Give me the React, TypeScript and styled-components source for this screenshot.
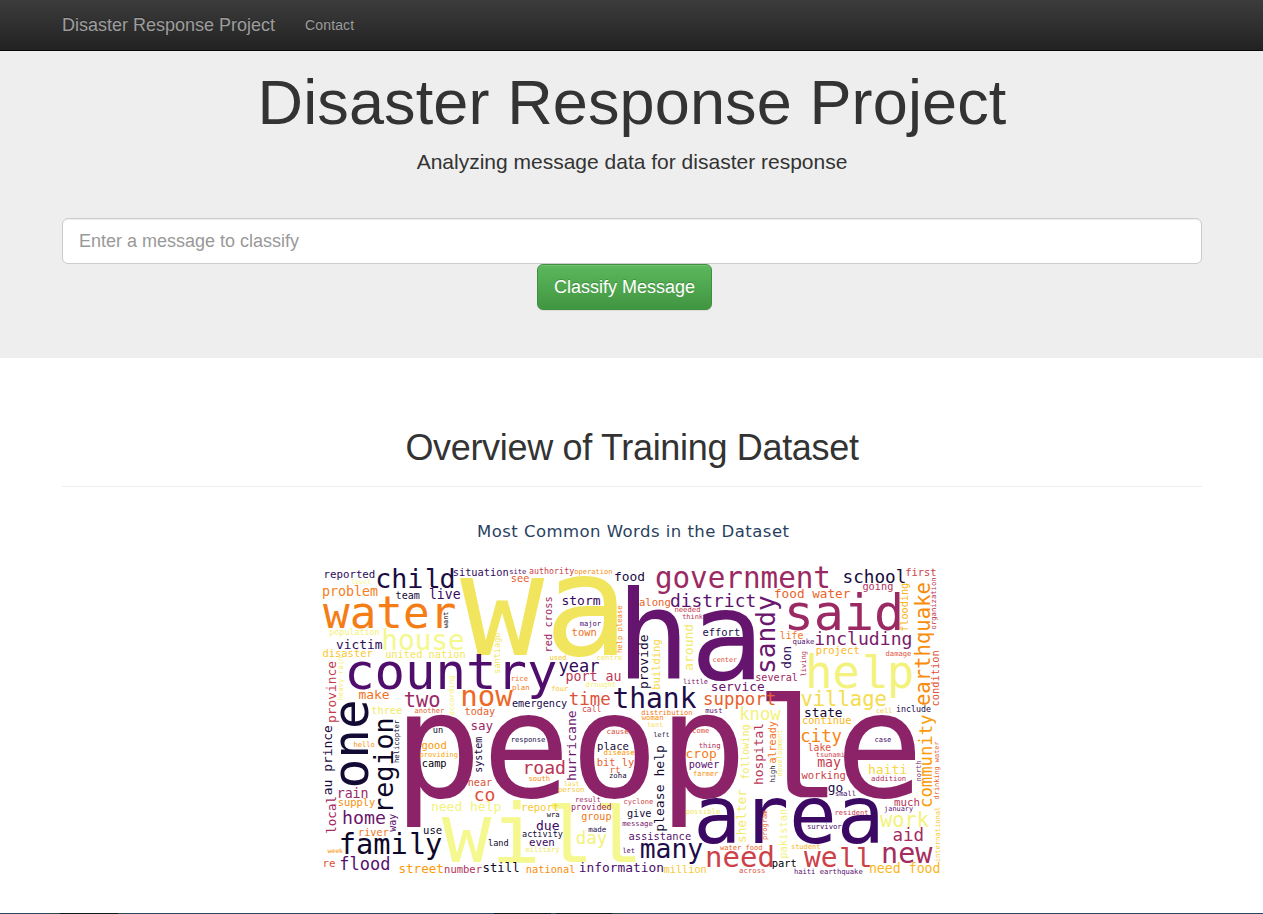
import React from 'react';
import styled, { createGlobalStyle } from 'styled-components';

const GlobalStyle = createGlobalStyle`
  * { box-sizing: border-box; }
  body {
    margin: 0;
    background: #fff;
    color: #333;
    font: 14px/20px "Liberation Sans", Arial, sans-serif;
    overflow: hidden;
  }
`;

const Page = styled.div`
  height: 914px;
  display: flex;
  flex-direction: column;
`;

const Navbar = styled.nav`
  height: 51px;
  padding: 0 62px;
  display: flex;
  align-items: center;
  gap: 30px;
  background: linear-gradient(to bottom, #3c3c3c 0%, #222 100%);
  border-bottom: 1px solid #080808;
  color: #9d9d9d;
  text-shadow: 0 -1px 0 rgba(0, 0, 0, 0.25);
`;

const Brand = styled.a`
  width: 213px;
  font-size: 18px;
  white-space: nowrap;
`;

const NavLink = styled.a`
  font-size: 14px;
  letter-spacing: 0.15px;
`;

const Jumbotron = styled.header`
  height: 307px;
  padding: 16.5px 61px 0 62px;
  background: #eee;
  text-align: center;
`;

const Title = styled.h1`
  margin: 0 0 10px;
  font-size: 63px;
  line-height: 69.3px;
  font-weight: 400;
  letter-spacing: 0.12px;
`;

const Lead = styled.p`
  margin: 0 0 41.8px;
  font-size: 21px;
  line-height: 29.4px;
`;

const Form = styled.form`
  display: flex;
  flex-direction: column;
  align-items: center;
`;

const MessageInput = styled.input`
  width: 1140px;
  height: 46px;
  padding: 10px 16px;
  border: 1px solid #ccc;
  border-radius: 6px;
  background: #fff;
  box-shadow: inset 0 1px 1px rgba(0, 0, 0, 0.075);
  font: 18px/24px "Liberation Sans", Arial, sans-serif;
  &::placeholder { color: #999; opacity: 1; }
`;

const SubmitButton = styled.button`
  width: 175px;
  height: 46px;
  margin-right: 15px;
  padding: 0;
  border: 1px solid #3e8f3e;
  border-radius: 6px;
  background: linear-gradient(to bottom, #5cb85c 0%, #419641 100%);
  box-shadow: inset 0 1px 0 rgba(255, 255, 255, 0.15), 0 1px 1px rgba(0, 0, 0, 0.075);
  color: #fff;
  font: 18px/24px "Liberation Sans", Arial, sans-serif;
  text-shadow: 0 -1px 0 rgba(0, 0, 0, 0.2);
`;

const Overview = styled.main`
  flex: 1;
  min-height: 0;
  padding: 70px 61px 0 62px;
`;

const SectionTitle = styled.h2`
  margin: 0;
  padding-bottom: 18px;
  border-bottom: 1px solid #eee;
  font-size: 36px;
  line-height: 40px;
  font-weight: 400;
  letter-spacing: -0.32px;
  text-align: center;
`;

const Cloud = styled.svg`
  display: block;
  width: 1140px;
  height: 393px;
  font-family: "DejaVu Sans Mono", monospace;
`;

const CloudTitle = styled.text`
  font: 16.5px "DejaVu Sans", Verdana, sans-serif;
  fill: #2a3f5f;
`;

const FlatFootL = styled.tspan`
  font-family: "Liberation Mono", monospace;
`;

const BottomEdge = styled.footer`
  height: 1px;
  background: linear-gradient(to right, #28465a 0 60px, #101820 60px 118px, #28465a 118px 494px, #10141a 494px 551px, #28465a 551px 556px, #101820 556px 612px, #28465a 612px);
`;

/* Horizontal words: text, left ink edge, right ink edge, baseline, colour */
type Word = [string, number, number, number, string];

const across: Word[] = [
  ['wa', 460, 617, 655, '#f1e55d'],
  ['ha', 626.5, 754, 679, '#65156e'],
  ['people', 405.7, 916.7, 796.5, '#8c2369'],
  ['will', 441.7, 636, 861.7, '#f4f88e'],
  ['area', 697.7, 878, 843.3, '#3b0964'],
  ['country', 347.7, 556, 689, '#4f0d6c'],
  ['said', 787.7, 900, 630, '#9b2964'],
  ['help', 809, 912, 688, '#f3f27c'],
  ['water', 323, 455, 628, '#f57d15'],
  ['government', 656.5, 829, 588, '#9b2964'],
  ['reported', 325, 374.5, 578, '#2c0a58'],
  ['child', 377, 453.5, 588, '#1b0c41'],
  ['situation', 453.5, 508, 575.7, '#2f0a5b'],
  ['level', 351.7, 370.7, 584, '#f3f68a'],
  ['problem', 323, 377.5, 596, '#f5801a'],
  ['team', 396, 419.5, 599, '#160b39'],
  ['live', 430, 460, 599, '#3b0964'],
  ['population', 330, 379, 634.7, '#f3f078'],
  ['house', 383.5, 463.5, 650, '#f4f88e'],
  ['victim', 336.5, 382, 649, '#2f0a5b'],
  ['disaster', 323, 372.5, 656.5, '#f9c72e'],
  ['united nation', 386, 465, 657.5, '#f3e55d'],
  ['site', 509.7, 526, 574.3, '#57106e'],
  ['authority', 529.5, 574, 574.3, '#cc4248'],
  ['operation', 574.7, 612, 573.5, '#f98e09'],
  ['see', 511.7, 529, 582, '#e8602d'],
  ['food', 615, 644, 580.7, '#1b0c41'],
  ['storm', 562.5, 600, 605, '#3b0964'],
  ['major', 580, 601, 626, '#4a0c6b'],
  ['town', 572, 596, 636, '#f1731d'],
  ['used', 550, 566, 659.5, '#f9c72e'],
  ['centre', 597, 622, 659.5, '#f3e55d'],
  ['year', 559, 599, 672, '#2f0a5b'],
  ['along', 639.5, 670, 605.5, '#ea632a'],
  ['district', 671, 755, 607, '#5d126e'],
  ['needed', 675, 700, 612, '#c43c4e'],
  ['think', 682.5, 703, 619, '#b93556'],
  ['effort', 703, 739.5, 636, '#210c4a'],
  ['center', 713, 737, 661.5, '#dd513a'],
  ['food water', 775, 850, 598, '#ea632a'],
  ['life', 780.5, 803, 638.5, '#f37819'],
  ['school', 844, 905.5, 582.7, '#160b39'],
  ['first', 906, 936, 575.7, '#cc4248'],
  ['going', 863, 892.5, 590, '#b1325a'],
  ['including', 816, 911, 645.3, '#781c6d'],
  ['quake', 793, 814, 644, '#57106e'],
  ['project', 816.5, 859, 653.7, '#fbb61a'],
  ['damage', 886, 911, 656.3, '#dd513a'],
  ['make', 359, 389, 699, '#f1731d'],
  ['two', 404.5, 439.5, 707.3, '#9b2964'],
  ['now', 462.7, 512.7, 705.7, '#ed6925'],
  ['three', 371.7, 401.7, 714, '#f2ea69'],
  ['another', 415, 444, 712.5, '#e8602d'],
  ['today', 465, 495, 714.7, '#e8602d'],
  ['hello', 354, 374.5, 747, '#f98e09'],
  ['good', 422, 446, 748.7, '#fb9b06'],
  ['un', 433.5, 442.5, 733, '#0d0829'],
  ['providing', 420, 457.5, 756.5, '#fca50a'],
  ['camp', 422.5, 446, 766.5, '#000004'],
  ['say', 471.5, 492.7, 729.7, '#9b2964'],
  ['rice', 511.7, 527.7, 681, '#f1731d'],
  ['plan', 512.5, 529, 690, '#f57d15'],
  ['emergency', 512.5, 567, 706.5, '#210c4a'],
  ['four', 551.7, 568, 690.7, '#f9c72e'],
  ['port au', 566.7, 620.5, 680.7, '#bc3754'],
  ['drought', 586, 615.7, 687.3, '#f3f078'],
  ['time', 569.5, 610, 705, '#dd513a'],
  ['call', 582.5, 601, 711.7, '#cc4248'],
  ['thank', 613.5, 696.5, 707.7, '#210c4a'],
  ['response', 511.7, 545, 742.3, '#210c4a'],
  ['cause', 607, 628.5, 734.3, '#dd513a'],
  ['place', 598, 628.5, 750, '#140b34'],
  ['disease', 604, 634.5, 754.5, '#fb9b06'],
  ['bit ly', 597.5, 634, 766, '#e8602d'],
  ['rt', 610.7, 620, 773, '#e8602d'],
  ['zoha', 609.5, 626, 777.5, '#160b39'],
  ['little', 683.5, 707.7, 683.7, '#781c6d'],
  ['service', 711.7, 764, 691, '#6a176e'],
  ['several', 756, 797.5, 680.7, '#9b2964'],
  ['support', 704.5, 775, 705, '#e8602d'],
  ['distribution', 641.7, 692, 714.7, '#f37819'],
  ['must', 705.5, 722, 712.7, '#6a176e'],
  ['woman', 641.7, 663, 720, '#f98e09'],
  ['tent', 647.5, 662.7, 726.7, '#f6d746'],
  ['know', 740.7, 780.7, 720, '#f3f27c'],
  ['left', 654, 669, 737, '#140b34'],
  ['come', 692.7, 709, 733.3, '#dd513a'],
  ['thing', 699, 720, 747.7, '#b1325a'],
  ['crop', 686.5, 716, 758.3, '#f57d15'],
  ['power', 689.5, 719, 767.7, '#57106e'],
  ['village', 801, 886, 706, '#f3dd4f'],
  ['cell', 876.5, 892, 712.7, '#f9c932'],
  ['include', 896.7, 930.7, 712.3, '#210c4a'],
  ['state', 805, 842, 716.7, '#140b34'],
  ['continue', 802.7, 851, 724.3, '#fbb61a'],
  ['city', 801.5, 841.5, 741.7, '#f8850f'],
  ['lake', 808.5, 830.7, 751, '#dd513a'],
  ['tsunami', 816, 844.5, 756.7, '#cc4248'],
  ['may', 817.7, 840.7, 766.5, '#c43c4e'],
  ['case', 875, 891, 742, '#3b0964'],
  ['haiti', 869, 906.7, 774, '#f6d746'],
  ['rain', 338.5, 367.5, 797.7, '#9b2964'],
  ['supply', 338.5, 375, 805.7, '#f98e09'],
  ['home', 343.5, 385, 824, '#6a176e'],
  ['river', 359.5, 388.5, 836, '#f37819'],
  ['week', 327.5, 343, 852.7, '#f98e09'],
  ['family', 341, 441.5, 854.3, '#0d0829'],
  ['re', 324, 335, 866.7, '#dd513a'],
  ['flood', 340.7, 389, 870, '#57106e'],
  ['street', 399.5, 443, 872.7, '#fb9b06'],
  ['number', 445, 481.7, 873, '#b1325a'],
  ['still', 483.5, 519, 871.7, '#0d0829'],
  ['national', 526.7, 575, 872.7, '#f98e09'],
  ['information', 580, 663, 871.7, '#4a0c6b'],
  ['million', 664, 706, 872.7, '#f9c932'],
  ['near', 468.5, 492, 785.7, '#dd513a'],
  ['co', 475, 494.5, 800.7, '#dd513a'],
  ['need help', 432, 500.7, 811, '#f3f27c'],
  ['use', 424, 441.7, 833.7, '#0d0829'],
  ['land', 488.7, 508, 846, '#0d0829'],
  ['road', 525, 564.5, 774.3, '#b93556'],
  ['south', 529, 549.5, 780.7, '#f98e09'],
  ['last', 564.5, 579, 786.3, '#f6d746'],
  ['person', 558.5, 584, 792.3, '#f9c932'],
  ['report', 522.5, 558.5, 811, '#f9c932'],
  ['wra', 546.7, 559, 816.7, '#0d0829'],
  ['due', 536.7, 559, 830.3, '#3b0964'],
  ['activity', 522.5, 562.7, 836.7, '#140b34'],
  ['even', 529.5, 554, 846, '#3b0964'],
  ['military', 525.7, 559.5, 852.3, '#f2ea69'],
  ['result', 576, 600.5, 802.3, '#a52c60'],
  ['provided', 571.7, 611, 810.3, '#9b2964'],
  ['group', 581.7, 611, 820, '#f37819'],
  ['made', 588.5, 606, 832, '#210c4a'],
  ['day', 576.7, 606.7, 843.7, '#f3f27c'],
  ['cyclone', 624, 653, 804.3, '#cc4248'],
  ['give', 627.5, 651, 817.3, '#140b34'],
  ['message', 622.5, 652.5, 825.7, '#781c6d'],
  ['assistance', 629, 690.7, 840.3, '#57106e'],
  ['let', 623, 634.5, 852.7, '#57106e'],
  ['many', 640.7, 702.5, 857.7, '#210c4a'],
  ['need', 707.5, 772.5, 867.3, '#cc4248'],
  ['across', 739.5, 765, 872.7, '#dd513a'],
  ['water food', 720, 762, 850.3, '#ed6925'],
  ['possible', 686, 720, 813.7, '#f3e55d'],
  ['farmer', 693.5, 718, 775.7, '#f98e09'],
  ['working', 801.5, 845, 779, '#cc4248'],
  ['go', 828.5, 842.5, 791.7, '#210c4a'],
  ['small', 835.5, 855.7, 796, '#3b0964'],
  ['addition', 871.5, 905.7, 780.7, '#b1325a'],
  ['much', 894.5, 919, 805.7, '#b93556'],
  ['january', 884.5, 913, 811.3, '#57106e'],
  ['resident', 835.5, 868, 814.7, '#c43c4e'],
  ['survivor', 807.5, 841.5, 828.7, '#4a0c6b'],
  ['work', 880, 929, 826.7, '#f3f27c'],
  ['aid', 893.5, 922.7, 841, '#a52c60'],
  ['student', 791.5, 820, 848.7, '#fbb61a'],
  ['well', 804, 870, 866.7, '#cc4248'],
  ['new', 883.5, 932.5, 863.3, '#a52c60'],
  ['part', 772.5, 796, 867.3, '#000004'],
  ['haiti earthquake', 794.5, 862.5, 873.7, '#57106e'],
  ['need food', 870, 939.5, 873.3, '#fbb61a'],
];

/* Words that read upwards: text, top ink edge, bottom ink edge, baseline x, colour */
const upwards: Word[] = [
  ['want', 612, 628, 448, '#000004'],
  ['red cross', 597, 651, 551.7, '#9b2964'],
  ['help please', 605.7, 652.5, 621.7, '#f8850f'],
  ['santiago', 633, 673, 499.5, '#f3e55d'],
  ['around', 625, 670, 693, '#f2ea69'],
  ['building', 640, 689, 660, '#f6d746'],
  ['provide', 635, 688, 648, '#140b34'],
  ['sandy', 596, 672, 775, '#6a176e'],
  ['don', 647, 668, 790.5, '#2f0a5b'],
  ['flooding', 583.5, 631, 908.3, '#fbb61a'],
  ['earthquake', 583, 705, 930, '#f98c0a'],
  ['organization', 578, 629, 936, '#bc3754'],
  ['living', 651.5, 676, 805.7, '#b1325a'],
  ['condition', 651, 705.7, 939, '#dd513a'],
  ['province', 661.7, 722, 335.7, '#c43c4e'],
  ['heavy rain', 657, 700, 343, '#f3f078'],
  ['according', 676, 715, 453.7, '#f3f078'],
  ['one', 701.7, 785.7, 367.7, '#140b34'],
  ['region', 719.5, 810, 393.3, '#0d0829'],
  ['helicopter', 720, 762.5, 398.8, '#160b39'],
  ['system', 737, 772, 482, '#210c4a'],
  ['au prince', 725.7, 794.5, 331.5, '#1b0c41'],
  ['hurricane', 711, 780, 576, '#6a176e'],
  ['following', 725, 779, 748.5, '#f2ea69'],
  ['hospital', 723.5, 784, 763, '#b93556'],
  ['already', 721.5, 763, 775.7, '#f1731d'],
  ['development', 730, 776, 781.7, '#f2ea69'],
  ['high', 766, 782, 775, '#140b34'],
  ['please help', 745.7, 830.7, 664, '#140b34'],
  ['community', 715, 806.7, 932, '#fb9b06'],
  ['drinking water', 741.5, 799, 939, '#e8602d'],
  ['north', 761, 781, 921, '#781c6d'],
  ['local', 796.7, 832.7, 336, '#a52c60'],
  ['way', 814, 831.7, 395.5, '#57106e'],
  ['shelter', 789.5, 842, 746, '#f2ea69'],
  ['program', 810.7, 839.5, 767, '#e8602d'],
  ['pakistan', 809.5, 858, 787, '#f3f27c'],
  ['international', 807, 861.7, 940, '#f9c932'],
];

/* Side bearings of the monospace glyphs, in em: left, right */
const bearings: Record<string, [number, number]> = {
  a: [0.055, 0.083], c: [0.07, 0.07], d: [0.055, 0.083], e: [0.05, 0.05],
  f: [0.08, 0.08], g: [0.055, 0.083], h: [0.084, 0.083], i: [0.09, 0.055],
  k: [0.09, 0.0], l: [0.08, 0.05], m: [0.04, 0.04], n: [0.084, 0.083],
  o: [0.055, 0.055], p: [0.083, 0.055], r: [0.14, 0.03], s: [0.08, 0.07],
  t: [0.04, 0.07], u: [0.083, 0.083], v: [0.03, 0.03], w: [0, 0],
  y: [0.03, 0.03], z: [0.08, 0.08], b: [0.083, 0.055],
};
const ADVANCE = 0.602;
const LARGE = 24;

function fit(text: string, start: number, end: number) {
  const left = (bearings[text[0]] || [0.06, 0.06])[0];
  const right = (bearings[text[text.length - 1]] || [0.06, 0.06])[1];
  const size = (end - start) / (ADVANCE * text.length - left - right);
  return { size, offset: left * size };
}

/* Large words take an "l" with a flat foot */
function Letters({ text, size }: { text: string; size: number }) {
  if (size < LARGE || !text.includes('l')) return <>{text}</>;
  return (
    <>
      {text.split(/(l+)/).filter(Boolean).map((part, i) =>
        part[0] === 'l' ? <FlatFootL key={i}>{part}</FlatFootL> : part,
      )}
    </>
  );
}

function AcrossWord({ word }: { word: Word }) {
  const [text, x0, x1, baseline, fill] = word;
  const { size, offset } = fit(text, x0, x1);
  return (
    <text x={x0 - offset} y={baseline} fontSize={size} fill={fill}>
      <Letters text={text} size={size} />
    </text>
  );
}

function UpwardsWord({ word }: { word: Word }) {
  const [text, top, bottom, baseline, fill] = word;
  const { size, offset } = fit(text, top, bottom);
  return (
    <text transform={`translate(${baseline} ${bottom + offset}) rotate(-90)`} fontSize={size} fill={fill}>
      {text}
    </text>
  );
}

export default function App() {
  return (
    <Page>
      <GlobalStyle />
      <Navbar>
        <Brand>Disaster Response Project</Brand>
        <NavLink>Contact</NavLink>
      </Navbar>
      <Jumbotron>
        <Title>Disaster Response Project</Title>
        <Lead>Analyzing message data for disaster response</Lead>
        <Form>
          <MessageInput placeholder="Enter a message to classify" />
          <SubmitButton type="button">Classify Message</SubmitButton>
        </Form>
      </Jumbotron>
      <Overview>
        <SectionTitle>Overview of Training Dataset</SectionTitle>
        <Cloud viewBox="62 487 1140 393">
          <CloudTitle x={477} y={537} textLength={312}>Most Common Words in the Dataset</CloudTitle>
          {across.map((word) => <AcrossWord key={word[0]} word={word} />)}
          {upwards.map((word) => <UpwardsWord key={word[0]} word={word} />)}
        </Cloud>
      </Overview>
      <BottomEdge />
    </Page>
  );
}
